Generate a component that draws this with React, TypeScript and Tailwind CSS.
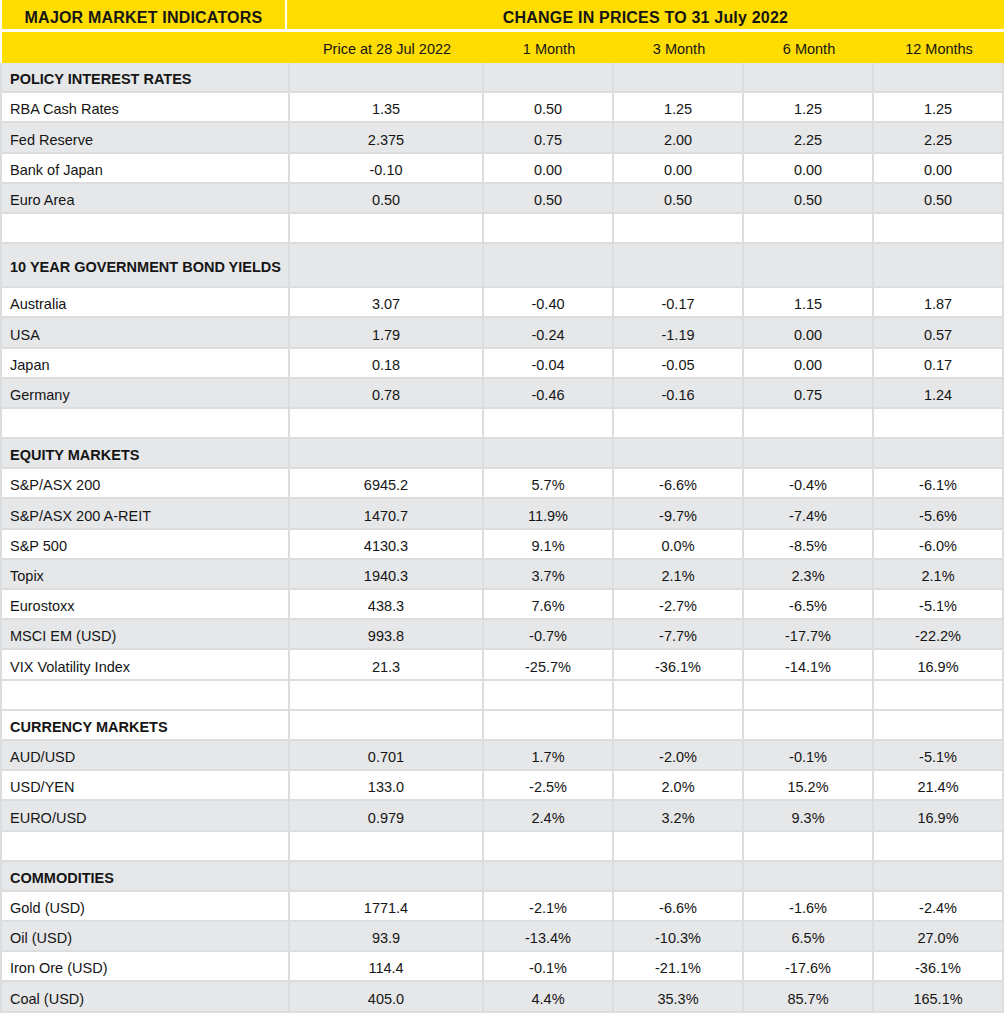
type Row = {
    label: string;
    values?: string[];
    section?: boolean;
    gray?: boolean;
    tall?: boolean;
};

const rows: Row[] = [
    { label: 'POLICY INTEREST RATES', section: true, gray: true },
    { label: 'RBA Cash Rates', values: ['1.35', '0.50', '1.25', '1.25', '1.25'] },
    { label: 'Fed Reserve', values: ['2.375', '0.75', '2.00', '2.25', '2.25'], gray: true },
    { label: 'Bank of Japan', values: ['-0.10', '0.00', '0.00', '0.00', '0.00'] },
    { label: 'Euro Area', values: ['0.50', '0.50', '0.50', '0.50', '0.50'], gray: true },
    { label: '' },
    { label: '10 YEAR GOVERNMENT BOND YIELDS', section: true, gray: true, tall: true },
    { label: 'Australia', values: ['3.07', '-0.40', '-0.17', '1.15', '1.87'] },
    { label: 'USA', values: ['1.79', '-0.24', '-1.19', '0.00', '0.57'], gray: true },
    { label: 'Japan', values: ['0.18', '-0.04', '-0.05', '0.00', '0.17'] },
    { label: 'Germany', values: ['0.78', '-0.46', '-0.16', '0.75', '1.24'], gray: true },
    { label: '' },
    { label: 'EQUITY MARKETS', section: true, gray: true },
    { label: 'S&P/ASX 200', values: ['6945.2', '5.7%', '-6.6%', '-0.4%', '-6.1%'] },
    { label: 'S&P/ASX 200 A-REIT', values: ['1470.7', '11.9%', '-9.7%', '-7.4%', '-5.6%'], gray: true },
    { label: 'S&P 500', values: ['4130.3', '9.1%', '0.0%', '-8.5%', '-6.0%'] },
    { label: 'Topix', values: ['1940.3', '3.7%', '2.1%', '2.3%', '2.1%'], gray: true },
    { label: 'Eurostoxx', values: ['438.3', '7.6%', '-2.7%', '-6.5%', '-5.1%'] },
    { label: 'MSCI EM (USD)', values: ['993.8', '-0.7%', '-7.7%', '-17.7%', '-22.2%'], gray: true },
    { label: 'VIX Volatility Index', values: ['21.3', '-25.7%', '-36.1%', '-14.1%', '16.9%'] },
    { label: '' },
    { label: 'CURRENCY MARKETS', section: true },
    { label: 'AUD/USD', values: ['0.701', '1.7%', '-2.0%', '-0.1%', '-5.1%'], gray: true },
    { label: 'USD/YEN', values: ['133.0', '-2.5%', '2.0%', '15.2%', '21.4%'] },
    { label: 'EURO/USD', values: ['0.979', '2.4%', '3.2%', '9.3%', '16.9%'], gray: true },
    { label: '' },
    { label: 'COMMODITIES', section: true, gray: true },
    { label: 'Gold (USD)', values: ['1771.4', '-2.1%', '-6.6%', '-1.6%', '-2.4%'] },
    { label: 'Oil (USD)', values: ['93.9', '-13.4%', '-10.3%', '6.5%', '27.0%'], gray: true },
    { label: 'Iron Ore (USD)', values: ['114.4', '-0.1%', '-21.1%', '-17.6%', '-36.1%'] },
    { label: 'Coal (USD)', values: ['405.0', '4.4%', '35.3%', '85.7%', '165.1%'], gray: true },
];

const headers = ['Price at 28 Jul 2022', '1 Month', '3 Month', '6 Month', '12 Months'];

function App() {
    return (
        <div className="w-[1005px] bg-white text-[#151515] font-['Liberation_Sans',Arial,sans-serif]">
            {/* top header */}
            <div className="flex gap-[2px] pl-[2px] pr-[1px] h-[29px]">
                <div className="w-[283px] bg-[#ffdd00] flex items-center justify-center pt-[6px] text-[16px] font-bold tracking-[0.2px]">
                    MAJOR MARKET INDICATORS
                </div>
                <div className="flex-1 bg-[#ffdd00] flex items-center justify-center pt-[6px] text-[16px] font-bold tracking-[0.2px]">
                    CHANGE IN PRICES TO 31 July 2022
                </div>
            </div>
            <div className="mt-[3px] ml-[2px] w-[1002px] h-[31px] bg-[#ffdd00] grid grid-cols-[288px_194px_130px_130px_130px_130px] text-[14.5px]">
                <div />
                {headers.map((h) => (
                    <div key={h} className="flex items-center justify-center pt-[5px]">{h}</div>
                ))}
            </div>

            {/* body */}
            <div className="w-[1004px] border-l-2 border-[#dcdddf]">
                {rows.map((r, i) => (
                    <div
                        key={i}
                        className={`grid grid-cols-[288px_194px_130px_130px_130px_130px] text-[14.5px] ${r.tall ? 'h-[44px]' : 'h-[30.2px]'} ${r.gray ? 'bg-[#e6e7e9]' : 'bg-white'}`}
                    >
                        <div className={`flex items-center pl-[8px] pt-[6px] border-r-2 border-b-2 border-[#dcdddf] ${r.section ? 'font-bold' : ''}`}>
                            {r.label}
                        </div>
                        {[0, 1, 2, 3, 4].map((j) => (
                            <div key={j} className="flex items-center justify-center pt-[6px] border-r-2 border-b-2 border-[#dcdddf]">
                                {r.values ? r.values[j] : ''}
                            </div>
                        ))}
                    </div>
                ))}
            </div>
        </div>
    );
}

export default App;
